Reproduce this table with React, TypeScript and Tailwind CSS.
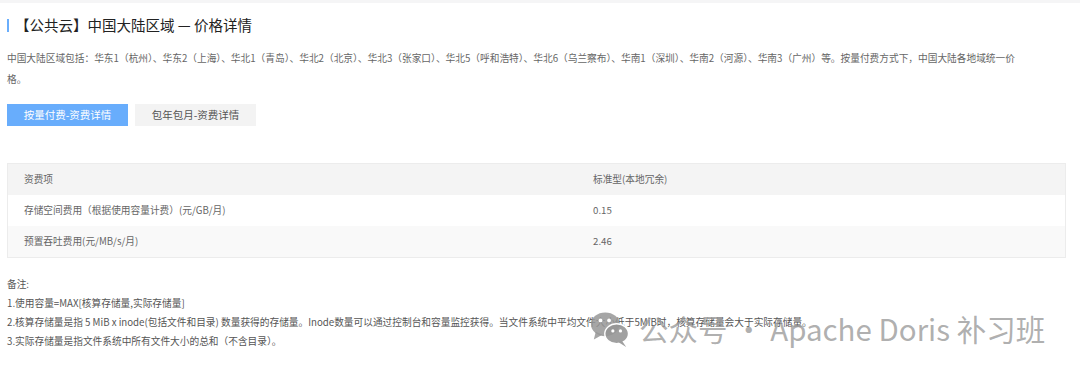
export default function App() {
  const cjk = "font-['Noto_Sans_CJK_SC','Noto_Sans',sans-serif]";

  const rows = [
    { name: "存储空间费用（根据使用容量计费）(元/GB/月)", price: "0.15" },
    { name: "预置吞吐费用(元/MB/s/月)", price: "2.46" },
  ];

  return (
    <div className={`relative w-[1080px] h-[370px] overflow-hidden bg-white border-t-[3px] border-[#f5f5f6] ${cjk}`}>
      <div className="pl-[7px] pr-[14px]">
        {/* Title */}
        <div className="flex items-center h-[16px] mt-[14px]">
          <div className="w-[2px] h-[13px] bg-[#6aaefc]"></div>
          <h1 className="ml-[6px] text-[14.5px] leading-none text-[#222] [text-spacing-trim:space-all]">
            【公共云】中国大陆区域 — 价格详情
          </h1>
        </div>

        {/* Description */}
        <p className="mt-[15px] text-[9.7px] leading-[21px] text-[#666] w-[1012px]">
          中国大陆区域包括：华东1（杭州）、华东2（上海）、华北1（青岛）、华北2（北京）、华北3（张家口）、华北5（呼和浩特）、华北6（乌兰察布）、华南1（深圳）、华南2（河源）、华南3（广州）等。按量付费方式下，中国大陆各地域统一价格。
        </p>

        {/* Tabs */}
        <div className="flex gap-[7px] mt-[14px]">
          <button className="w-[121px] h-[22px] bg-[#68adfc] text-white text-[10.5px] leading-none">
            按量付费-资费详情
          </button>
          <button className="w-[121px] h-[22px] bg-[#f3f3f3] text-[#555] text-[10.5px] leading-none">
            包年包月-资费详情
          </button>
        </div>

        {/* Table */}
        <div className="mt-[37px] border border-[#ececec] text-[9.7px] text-[#666]">
          <div className="grid grid-cols-[569px_1fr] h-[31px] items-center bg-[#f4f4f4]">
            <div className="pl-[16px]">资费项</div>
            <div className="pl-[16px]">标准型(本地冗余)</div>
          </div>
          {rows.map((row, i) => (
            <div
              key={row.name}
              className={`grid grid-cols-[569px_1fr] h-[31px] items-center ${
                i % 2 === 0 ? "bg-white" : "bg-[#f9f9f9]"
              }`}
            >
              <div className="pl-[16px]">{row.name}</div>
              <div className="pl-[16px]">{row.price}</div>
            </div>
          ))}
        </div>

        {/* Notes */}
        <div className="mt-[17px] text-[9.7px] leading-[19px] text-[#555]">
          <p>备注:</p>
          <p>1.使用容量=MAX[核算存储量,实际存储量]</p>
          <p>
            2.核算存储量是指 5 MiB x inode(包括文件和目录) 数量获得的存储量。Inode数量可以通过控制台和容量监控获得。当文件系统中平均文件大小低于5MiB时，核算存储量会大于实际存储量。
          </p>
          <p>3.实际存储量是指文件系统中所有文件大小的总和（不含目录）。</p>
        </div>
      </div>

      {/* Watermark */}
      <div className="absolute left-[590px] top-[307px] flex items-center gap-[9px] whitespace-nowrap text-[rgba(155,155,155,0.8)] pointer-events-none">
        <svg width="40" height="38" viewBox="0 0 42 40">
          <g fill="rgba(150,150,150,0.85)">
            <ellipse cx="16" cy="15" rx="15" ry="12.5" />
            <path d="M6 23 L4 31 L13 26 Z" />
          </g>
          <g fill="rgba(150,150,150,0.9)" stroke="white" strokeWidth="1.5">
            <ellipse cx="28" cy="25" rx="12.5" ry="10.5" />
          </g>
          <path d="M34 33 L38 39 L30 34 Z" fill="rgba(150,150,150,0.9)" />
          <g fill="white">
            <circle cx="11" cy="11" r="2" />
            <circle cx="20" cy="11" r="2" />
            <circle cx="24" cy="22" r="1.7" />
            <circle cx="32" cy="22" r="1.7" />
          </g>
        </svg>
        <span className="text-[29.5px] leading-none">
          公众号 · Apache Doris 补习班
        </span>
      </div>
    </div>
  );
}
